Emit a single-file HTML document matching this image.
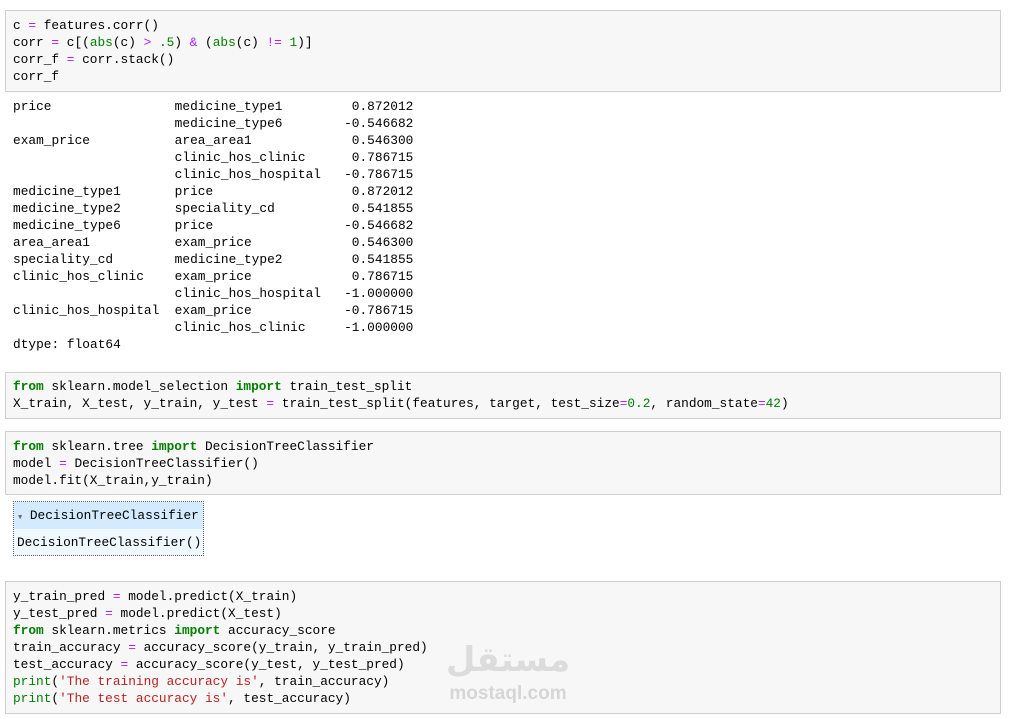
<!DOCTYPE html>
<html><head><meta charset="utf-8"><style>
body{margin:0;width:1017px;height:719px;background:#fff;position:relative;overflow:hidden;font-family:"Liberation Mono",monospace;font-size:12.8px;color:#000}
pre{margin:0;font:inherit;line-height:17px;white-space:pre}
.cell{position:absolute;left:5px;width:996px;background:#f7f7f7;border:1px solid #cfcfcf;box-sizing:border-box;padding:0 7px}
.k{color:#008000;font-weight:bold}.o{color:#aa22ff}.n{color:#008000}.s{color:#ba2121}.b{color:#008000}
.out{position:absolute;left:13px}
</style></head><body>
<div class="cell" style="top:10px;height:82px;padding-top:6px"><pre>c <span class="o">=</span> features.corr()
corr <span class="o">=</span> c[(<span class="b">abs</span>(c) <span class="o">&gt;</span> <span class="n">.5</span>) <span class="o">&amp;</span> (<span class="b">abs</span>(c) <span class="o">!=</span> <span class="n">1</span>)]
corr_f <span class="o">=</span> corr.stack()
corr_f</pre></div>
<pre class="out" style="top:98px;letter-spacing:0.02px">price                medicine_type1         0.872012
                     medicine_type6        -0.546682
exam_price           area_area1             0.546300
                     clinic_hos_clinic      0.786715
                     clinic_hos_hospital   -0.786715
medicine_type1       price                  0.872012
medicine_type2       speciality_cd          0.541855
medicine_type6       price                 -0.546682
area_area1           exam_price             0.546300
speciality_cd        medicine_type2         0.541855
clinic_hos_clinic    exam_price             0.786715
                     clinic_hos_hospital   -1.000000
clinic_hos_hospital  exam_price            -0.786715
                     clinic_hos_clinic     -1.000000
dtype: float64</pre>
<div class="cell" style="top:372px;height:47px;padding-top:5px"><pre><span class="k">from</span> sklearn.model_selection <span class="k">import</span> train_test_split
X_train, X_test, y_train, y_test <span class="o">=</span> train_test_split(features, target, test_size<span class="o">=</span><span class="n">0.2</span>, random_state<span class="o">=</span><span class="n">42</span>)</pre></div>
<div class="cell" style="top:431px;height:64px;padding-top:6px"><pre><span class="k">from</span> sklearn.tree <span class="k">import</span> DecisionTreeClassifier
model <span class="o">=</span> DecisionTreeClassifier()
model.fit(X_train,y_train)</pre></div>
<div style="position:absolute;left:13px;top:501px;width:191px;height:55px;border:1px dotted #666;box-sizing:border-box;background:#f0f8ff">
<div style="height:27px;background:#d4ebff;line-height:28px;padding-left:4px"><span style="font-size:7px;color:#666">▼</span> DecisionTreeClassifier</div>
<div style="line-height:28px;padding-left:3px">DecisionTreeClassifier()</div></div>
<div class="cell" style="top:581px;height:133px;padding-top:6px"><pre>y_train_pred <span class="o">=</span> model.predict(X_train)
y_test_pred <span class="o">=</span> model.predict(X_test)
<span class="k">from</span> sklearn.metrics <span class="k">import</span> accuracy_score
train_accuracy <span class="o">=</span> accuracy_score(y_train, y_train_pred)
test_accuracy <span class="o">=</span> accuracy_score(y_test, y_test_pred)
<span class="n">print</span>(<span class="s">'The training accuracy is'</span>, train_accuracy)
<span class="n">print</span>(<span class="s">'The test accuracy is'</span>, test_accuracy)</pre></div>
<div style="position:absolute;left:445px;top:640px;width:126px;text-align:center;color:#dcdcdc;font-family:'DejaVu Sans',sans-serif;font-weight:bold;font-size:34px;line-height:40px">مستقل</div>
<div style="position:absolute;left:445px;top:684px;width:126px;text-align:center;color:#d6d6d6;font-family:'Liberation Sans',sans-serif;font-weight:bold;font-size:19px;line-height:20px">mostaql.com</div>
</body></html>
